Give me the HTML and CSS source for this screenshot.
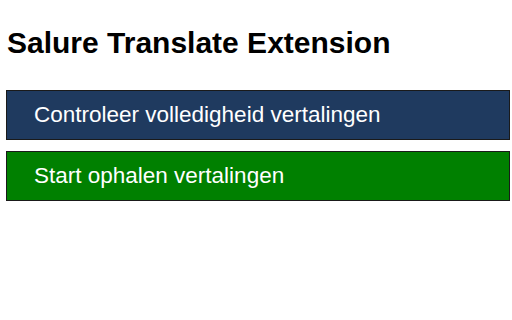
FILE: index.html
```html
<!DOCTYPE html>
<html>
<head>
<meta charset="utf-8">
<link rel="stylesheet" href="styles.css">
</head>
<body>
<h1 class="title">Salure Translate Extension</h1>
<div class="actions">
  <button class="btn btn-check">Controleer volledigheid vertalingen</button>
  <button class="btn btn-start">Start ophalen vertalingen</button>
</div>
</body>
</html>
```
FILE: styles.css
```css
html, body {
  margin: 0;
  background: #ffffff;
}
body {
  padding: 0 2px 0 6px;
  font-family: "Liberation Sans", Arial, sans-serif;
}
.title {
  font-size: 30px;
  font-weight: bold;
  margin: 0;
  padding: 23px 0 0 1px;
  line-height: 40px;
  color: #000;
}
.actions {
  display: flex;
  flex-direction: column;
  gap: 11px;
  margin-top: 27px;
}
.btn {
  display: block;
  width: 100%;
  height: 50px;
  border: 1px solid #1a1a1a;
  color: #ffffff;
  font-family: "Liberation Sans", Arial, sans-serif;
  font-size: 22.5px;
  text-align: left;
  padding: 0 0 0 27px;
  margin: 0;
}
.btn-check {
  background: #1f3a5f;
}
.btn-start {
  background: #008000;
}
```
